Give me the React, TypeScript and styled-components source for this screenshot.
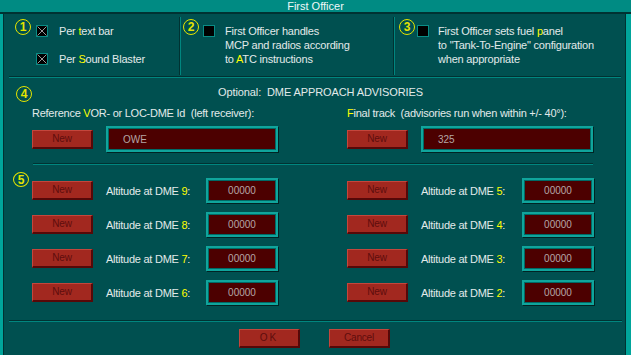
import React from "react";
import styled, { createGlobalStyle } from "styled-components";

const C = {
  bg: "#005050",
  title: "#008B83",
  frame: "#00A59B",
  dark: "#003232",
  sepLight: "#00867F",
  text: "#E2EAEA",
  yellow: "#FFFF00",
  badge: "#E4E400",
  btn: "#A2281F",
  btnHi: "#C4463C",
  btnLo: "#560808",
  btnText: "#5E0D0D",
  field: "#4C0000",
  fieldText: "#B4A6A6",
  fieldBorder: "#10A59C",
};

const Global = createGlobalStyle`
  html, body { margin: 0; padding: 0; background: ${C.bg}; }
  * { box-sizing: border-box; }
`;

const Page = styled.div`
  width: 631px;
  height: 355px;
  overflow: hidden;
  display: flex;
  flex-direction: column;
  background: ${C.bg};
  font-family: "Liberation Sans", Arial, sans-serif;
  font-size: 11px;
  color: ${C.text};
`;

const TitleBar = styled.div`
  height: 14px;
  background: ${C.title};
  border-bottom: 2px solid ${C.dark};
  display: flex;
  justify-content: center;
  align-items: center;
  line-height: 12px;
  color: #f0f8f8;
`;

const Frame = styled.div`
  flex: 1;
  display: flex;
  border-left: 3px solid ${C.frame};
  border-right: 5px solid ${C.frame};
`;

const Content = styled.div`
  flex: 1;
  display: flex;
  flex-direction: column;
  border-left: 1px solid ${C.dark};
  border-right: 1px solid ${C.dark};
  position: relative;
`;

const TopGrid = styled.div`
  display: grid;
  grid-template-columns: 170px 2px 212px 2px 1fr;
  height: 62px;
  margin: 0 4px 0 5px;
`;

const TopCol = styled.div<{ $pl: number; $gap: number }>`
  display: flex;
  align-items: flex-start;
  padding: 5px 0 0 ${(p) => p.$pl}px;
  gap: ${(p) => p.$gap}px;
`;

const VSep = styled.div`
  margin: 3px 0 1px;
  border-left: 1px solid ${C.dark};
  border-right: 1px solid ${C.sepLight};
`;

const HSep = styled.div<{ $left: number; $right: number; $top?: number }>`
  height: 2px;
  margin: ${(p) => p.$top ?? 0}px ${(p) => p.$right}px 0 ${(p) => p.$left}px;
  border-top: 1px solid ${C.dark};
  border-bottom: 1px solid ${C.sepLight};
`;

const Badge = styled.div`
  width: 16px;
  height: 16px;
  flex: none;
  border-radius: 50%;
  border: 1.5px solid ${C.badge};
  color: ${C.badge};
  font-weight: bold;
  font-size: 12px;
  line-height: 1;
  display: flex;
  align-items: center;
  justify-content: center;
`;

const FloatBadge = styled(Badge)`
  position: absolute;
  left: 9px;
  top: 7px;
  width: 16px;
  height: 15px;
`;

const OptionStack = styled.div`
  display: flex;
  flex-direction: column;
  gap: 14px;
  margin-top: 5px;
`;

const Option = styled.div<{ $gap: number }>`
  display: flex;
  align-items: flex-start;
  gap: ${(p) => p.$gap}px;
`;

const CheckBox = styled.div`
  width: 12px;
  height: 12px;
  margin-top: 1px;
  flex: none;
  background: #000;
  border: 1px solid #0a8c86;
  display: flex;
  align-items: center;
  justify-content: center;
`;

const OptText = styled.div`
  line-height: 14px;
  letter-spacing: -0.2px;
  white-space: nowrap;
`;

const Hi = styled.span`
  color: ${C.yellow};
`;

const DmeHeader = styled.div`
  display: grid;
  grid-template-columns: 1fr auto 1fr;
  align-items: start;
  padding: 8px 0 0 12px;
  height: 24px;
`;

const HeaderTitle = styled.div`
  margin-top: -1px;
  line-height: 14px;
  white-space: pre;
  letter-spacing: -0.1px;
`;

const TwoCol = styled.div<{ $rowGap?: number }>`
  display: grid;
  grid-template-columns: 246px 247px;
  column-gap: 69px;
  row-gap: ${(p) => p.$rowGap ?? 0}px;
  padding-left: 28px;
`;

const Field = styled.div`
  display: flex;
  flex-direction: column;
  padding-top: 4px;
`;

const FieldLabel = styled.div`
  line-height: 14px;
  white-space: pre;
  letter-spacing: -0.25px;
`;

const FieldRow = styled.div`
  display: flex;
  align-items: center;
  gap: 13px;
  margin-top: 6px;
`;

const Button = styled.div<{ $spaced?: boolean }>`
  width: 61px;
  height: 19px;
  flex: none;
  background: ${C.btn};
  border-top: 1px solid ${C.btnHi};
  border-left: 1px solid ${C.btnHi};
  border-right: 2px solid ${C.btnLo};
  border-bottom: 2px solid ${C.btnLo};
  color: ${C.btnText};
  font-size: 10px;
  letter-spacing: ${(p) => (p.$spaced ? 2 : -0.2)}px;
  display: flex;
  align-items: center;
  justify-content: center;
  line-height: 1;
`;

const Input = styled.div<{ $wide?: boolean }>`
  width: ${(p) => (p.$wide ? "172px" : "72px")};
  height: ${(p) => (p.$wide ? 26 : 25)}px;
  flex: none;
  background: ${C.field};
  border: 2px solid ${C.fieldBorder};
  box-shadow: 1px 1px 0 #002424, inset 0 0 0 1px #006a66;
  color: ${C.fieldText};
  font-size: 10px;
  display: flex;
  align-items: center;
  justify-content: ${(p) => (p.$wide ? "flex-start" : "center")};
  padding-left: ${(p) => (p.$wide ? 15 : 0)}px;
`;

const AltSection = styled.div`
  position: relative;
  padding-top: 13px;
`;

const AltRow = styled.div`
  display: flex;
  align-items: center;
  height: 25px;
`;

const AltLabel = styled.div`
  flex: 1;
  padding-left: 13px;
  letter-spacing: -0.25px;
  white-space: nowrap;
`;

const Footer = styled.div`
  display: flex;
  justify-content: center;
  gap: 29px;
  padding-top: 7px;
`;

const XMark = () => (
  <svg width="10" height="10" viewBox="0 0 10 10">
    <path d="M0.5 0.5 L9.5 9.5 M9.5 0.5 L0.5 9.5" stroke="#9a9a9a" strokeWidth="1" />
  </svg>
);

const Check = ({ checked }: { checked?: boolean }) => (
  <CheckBox>{checked ? <XMark /> : null}</CheckBox>
);

const AltItem = ({ n }: { n: number }) => (
  <AltRow>
    <Button>New</Button>
    <AltLabel>
      Altitude at DME <Hi>{n}</Hi>:
    </AltLabel>
    <Input>00000</Input>
  </AltRow>
);

export default function App() {
  const pairs: [number, number][] = [
    [9, 5],
    [8, 4],
    [7, 3],
    [6, 2],
  ];
  return (
    <>
      <Global />
      <Page>
        <TitleBar>First Officer</TitleBar>
        <Frame>
          <Content>
            <TopGrid>
              <TopCol $pl={6} $gap={5}>
                <Badge>1</Badge>
                <OptionStack>
                  <Option $gap={11}>
                    <Check checked />
                    <OptText>
                      Per <Hi>t</Hi>ext bar
                    </OptText>
                  </Option>
                  <Option $gap={11}>
                    <Check checked />
                    <OptText>
                      Per <Hi>S</Hi>ound Blaster
                    </OptText>
                  </Option>
                </OptionStack>
              </TopCol>
              <VSep />
              <TopCol $pl={2} $gap={4}>
                <Badge>2</Badge>
                <OptionStack>
                  <Option $gap={10}>
                    <Check />
                    <OptText>
                      First Officer handles
                      <br />
                      MCP and radios according
                      <br />
                      to <Hi>A</Hi>TC instructions
                    </OptText>
                  </Option>
                </OptionStack>
              </TopCol>
              <VSep />
              <TopCol $pl={4} $gap={2}>
                <Badge>3</Badge>
                <OptionStack>
                  <Option $gap={9}>
                    <Check />
                    <OptText>
                      First Officer sets fuel <Hi>p</Hi>anel
                      <br />
                      to "Tank-To-Engine" configuration
                      <br />
                      when appropriate
                    </OptText>
                  </Option>
                </OptionStack>
              </TopCol>
            </TopGrid>
            <HSep $left={5} $right={4} />
            <DmeHeader>
              <Badge>4</Badge>
              <HeaderTitle>Optional:  DME APPROACH ADVISORIES</HeaderTitle>
              <div />
            </DmeHeader>
            <TwoCol>
              <Field>
                <FieldLabel>
                  Reference <Hi>V</Hi>OR- or LOC-DME Id  (left receiver):
                </FieldLabel>
                <FieldRow>
                  <Button>New</Button>
                  <Input $wide>OWE</Input>
                </FieldRow>
              </Field>
              <Field>
                <FieldLabel>
                  <Hi>F</Hi>inal track  (advisories run when within +/- 40°):
                </FieldLabel>
                <FieldRow>
                  <Button>New</Button>
                  <Input $wide>325</Input>
                </FieldRow>
              </Field>
            </TwoCol>
            <HSep $left={29} $right={32} $top={11} />
            <AltSection>
              <FloatBadge>5</FloatBadge>
              <TwoCol $rowGap={9}>
                {pairs.map(([a, b]) => (
                  <React.Fragment key={a}>
                    <AltItem n={a} />
                    <AltItem n={b} />
                  </React.Fragment>
                ))}
              </TwoCol>
            </AltSection>
            <HSep $left={5} $right={3} $top={15} />
            <Footer>
              <Button $spaced>OK</Button>
              <Button>Cancel</Button>
            </Footer>
          </Content>
        </Frame>
      </Page>
    </>
  );
}
